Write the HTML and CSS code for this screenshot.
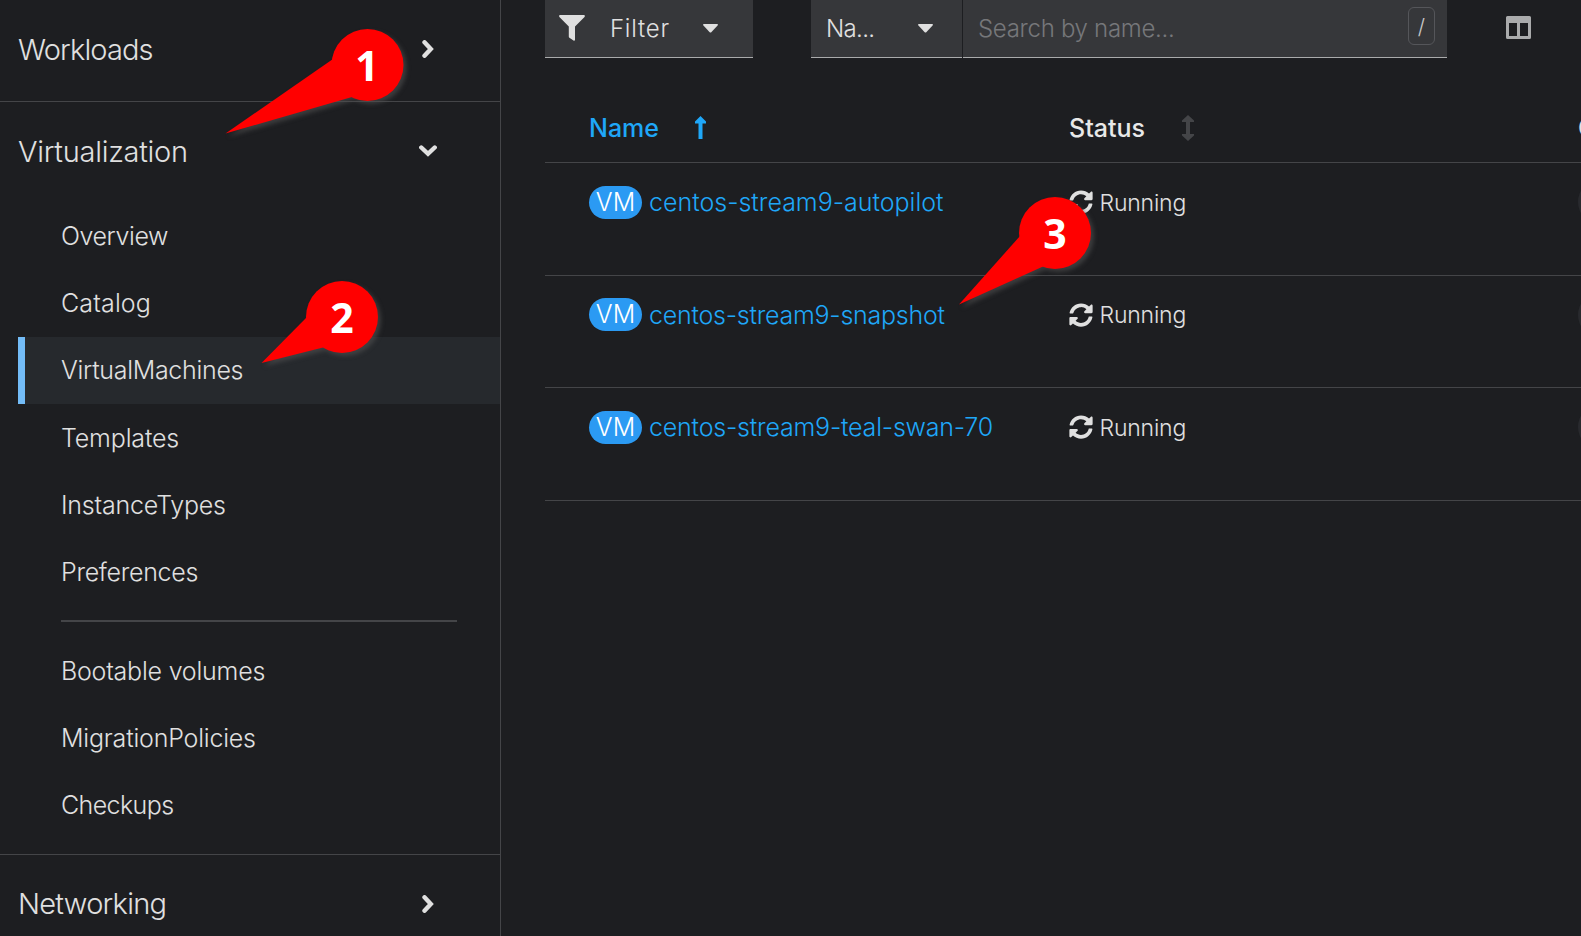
FILE: index.html
```html
<!DOCTYPE html>
<html lang="en">
<head>
<meta charset="utf-8">
<title>VirtualMachines</title>
<link rel="stylesheet" href="styles.css">
</head>
<body>
<svg class="defs" aria-hidden="true">
  <symbol id="chevron" viewBox="0 0 12 18"><path d="M2.500 2.300 8.800 9l-6.300 6.700" fill="none" stroke="currentColor" stroke-width="4.400" stroke-linecap="round"/></symbol>
  <symbol id="caret" viewBox="0 0 15 9"><path d="M.8 0h13.4q1.2.4.4 1.6L8.3 8.2q-.8.8-1.6 0L.4 1.6Q-.4.4.8 0z" fill="currentColor"/></symbol>
  <symbol id="sync" viewBox="0 0 512 512"><path fill="currentColor" d="M370.72 133.28C339.458 104.008 298.888 87.962 255.848 88c-77.458.068-144.328 53.178-162.791 126.85-1.344 5.363-6.122 9.15-11.651 9.15H24.103c-7.498 0-13.194-6.807-11.807-14.176C33.933 94.924 134.813 8 256 8c66.448 0 126.791 26.136 171.315 68.685L463.03 40.97C478.149 25.851 504 36.559 504 57.941V192c0 13.255-10.745 24-24 24H345.941c-21.382 0-32.09-25.851-16.971-40.971l41.75-41.749zM32 296h134.059c21.382 0 32.09 25.851 16.971 40.971l-41.75 41.75c31.262 29.273 71.835 45.319 114.876 45.28 77.418-.07 144.315-53.144 162.787-126.849 1.344-5.363 6.122-9.15 11.651-9.15h57.304c7.498 0 13.194 6.807 11.807 14.176C478.067 417.076 377.187 504 256 504c-66.448 0-126.791-26.136-171.315-68.685L48.97 471.03C33.851 486.149 8 475.441 8 454.059V320c0-13.255 10.745-24 24-24z"/></symbol>
</svg>
<div class="page">
  <nav class="sidebar">
    <section class="group group-first">
      <div class="group-head"><span class="t-workloads">Workloads</span><svg class="chev"><use href="#chevron"/></svg></div>
    </section>
    <section class="group group-open">
      <div class="group-head"><span class="t-virtualization">Virtualization</span><svg class="chev down"><use href="#chevron"/></svg></div>
      <ul class="items">
        <li><span class="t-overview">Overview</span></li>
        <li><span class="t-catalog">Catalog</span></li>
        <li class="active"><span class="t-vms">VirtualMachines</span></li>
        <li><span class="t-templates">Templates</span></li>
        <li><span class="t-instance">InstanceTypes</span></li>
        <li><span class="t-preferences">Preferences</span></li>
        <li class="rule"></li>
        <li><span class="t-bootable">Bootable volumes</span></li>
        <li><span class="t-migration">MigrationPolicies</span></li>
        <li><span class="t-checkups">Checkups</span></li>
      </ul>
    </section>
    <section class="group group-last">
      <div class="group-head"><span class="t-networking">Networking</span><svg class="chev"><use href="#chevron"/></svg></div>
    </section>
  </nav>
  <main class="content">
    <div class="toolbar">
      <div class="control filter">
        <svg class="funnel" viewBox="0 0 26 26"><path fill="currentColor" d="M1 0h24q1.400.4.5 1.900L16 11.500V25q-.4 1.200-1.500.6L10.400 22.800q-.6-.5-.6-1.200V11.500L.4 1.900Q-.4.4 1 0z"/></svg>
        <span class="t-filter">Filter</span>
        <svg class="caret"><use href="#caret"/></svg>
      </div>
      <div class="control attribute"><span class="t-na">Na...</span><svg class="caret"><use href="#caret"/></svg></div>
      <div class="control search"><span class="t-search">Search by name...</span><kbd>/</kbd></div>
      <svg class="columns" viewBox="0 0 25 23"><path fill="currentColor" fill-rule="evenodd" d="M1.500 0h22Q25 0 25 1.500v20q0 1.500-1.500 1.500h-22Q0 23 0 21.500v-20Q0 0 1.500 0zM3 7v13h8V7zm11 0v13h8V7z"/></svg>
    </div>
    <div class="table">
      <div class="row head">
        <div class="cell name"><span class="t-name">Name</span><svg class="sort-up" viewBox="0 0 11 23"><path fill="currentColor" d="M5.500 0 11 5.500V7.500H7.500V23h-4V7.500H0V5.500z"/></svg></div>
        <div class="cell status"><span class="t-status">Status</span><svg class="sort-both" viewBox="0 0 12 26"><path fill="currentColor" d="M6 0 12 5.500V7H8v12h4v1.500L6 26 0 20.500V19h4V7H0V5.500z"/></svg></div>
        <div class="cell more">C</div>
      </div>
      <div class="row">
        <div class="cell name"><span class="badge">VM</span><a class="t-autopilot">centos-stream9-autopilot</a></div>
        <div class="cell status"><svg class="sync"><use href="#sync"/></svg><span class="t-running">Running</span></div>
        <div class="cell more"><i class="disc"></i></div>
      </div>
      <div class="row">
        <div class="cell name"><span class="badge">VM</span><a class="t-snapshot">centos-stream9-snapshot</a></div>
        <div class="cell status"><svg class="sync"><use href="#sync"/></svg><span class="t-running">Running</span></div>
        <div class="cell more"><i class="disc"></i></div>
      </div>
      <div class="row">
        <div class="cell name"><span class="badge">VM</span><a class="t-swan">centos-stream9-teal-swan-70</a></div>
        <div class="cell status"><svg class="sync"><use href="#sync"/></svg><span class="t-running">Running</span></div>
        <div class="cell more"><i class="disc"></i></div>
      </div>
    </div>
  </main>
</div>
<svg class="callouts" viewBox="0 0 1581 936">
  <g class="pin"><path d="M225.500 133.500 333 59 352 97z"/><circle cx="367.500" cy="65" r="36"/></g>
  <g class="pin"><path d="M261.500 363 307 317 323 347.500z"/><circle cx="342" cy="317" r="36"/></g>
  <g class="pin"><path d="M959 304.500 1020 236 1043 266.500z"/><circle cx="1055" cy="233" r="36"/></g>
  <text x="367" y="81">1</text>
  <text x="342" y="333">2</text>
  <text x="1055" y="249">3</text>
</svg>
</body>
</html>
```
FILE: styles.css
```css
* { box-sizing: border-box; }
body {
  margin: 0;
  width: 1581px;
  height: 936px;
  overflow: hidden;
  background: #1d1e21;
  color: #e0e0e0;
  font-family: Inter, "Open Sans", sans-serif;
  font-weight: 300;
  font-size: 25px;
}
.defs { display: none; }
svg { flex: none; }
span, a { white-space: nowrap; }
.page { display: flex; height: 936px; overflow: hidden; }

.sidebar { width: 501px; flex: none; border-right: 1px solid #444548; }
.group { border-bottom: 1px solid #444548; }
.group-first { height: 102px; }
.group-open { height: 753px; }
.group-head {
  display: flex;
  align-items: center;
  justify-content: space-between;
  height: 100.500px;
  padding: 0 66px 0 18px;
  font-size: 29px;
  line-height: 99px;
}
.group-head span { margin-top: -2px; }
.group-last .group-head span { margin-top: -4px; }
.chev { width: 12px; height: 18px; margin-top: -3px; }
.chev.down { transform: rotate(90deg); }
.items { list-style: none; margin: 0; padding: 0 0 0 18px; }
.items li {
  height: 67.200px;
  padding-left: 43px;
  line-height: 67.500px;
}
.items .active { padding-left: 36px; border-left: 7px solid #73bcf7; background: #26292d; }
.items .active ~ li { line-height: 69px; }
.items .rule {
  height: 2px;
  margin: 14px 43px 15px;
  padding: 0;
  background: #444548;
}

.content { flex: 1; min-width: 0; padding-left: 44px; }
.toolbar { display: flex; height: 58px; }
.control {
  display: flex;
  align-items: center;
  height: 58px;
  background: #36373a;
  border-bottom: 1px solid #aaabac;
  font-size: 24px;
}
.filter { width: 208px; margin-right: 58px; padding-left: 14px; }
.funnel { width: 26px; height: 26px; margin: -2px 25px 0 0; }
.filter span { width: 93px; }
.caret { width: 15px; height: 9px; }
.attribute { width: 151px; margin-right: 1px; padding-left: 15px; }
.attribute span { width: 92px; }
.search { width: 484px; padding: 0 12px 0 15px; justify-content: space-between; color: #76777a; }
kbd {
  width: 27px;
  height: 38px;
  margin-top: -5px;
  border: 1px solid #55565a;
  border-radius: 6px;
  color: #c8c8c8;
  font: 300 21px/38px Inter, sans-serif;
  text-align: center;
}
.columns { width: 25px; height: 23px; margin: 16px 0 0 59px; color: #aaabac; }

.table { padding-top: 46px; }
.row { display: flex; height: 112.600px; border-bottom: 1px solid #444548; }
.head { height: 59px; font-weight: 500; }
.cell { display: flex; flex: none; align-items: center; height: 33px; margin-top: 22.600px; }
.head .cell { height: 46px; margin-top: 1px; }
.head .cell svg { margin-top: -1px; }
.cell.name { width: 480px; padding-left: 44px; color: #1fa7f8; }
.cell.status { width: 554px; padding-left: 44px; }
.head .status { color: #e8e8e8; }
.head .more { width: 4px; overflow: hidden; margin-left: -1px; }
.sort-up { width: 11px; height: 23px; }
.sort-both { width: 12px; height: 26px; color: #444548; }
.head .name span { width: 106px; }
.head .status span { width: 113px; }
.badge {
  width: 53px;
  height: 33px;
  margin-right: 7px;
  border-radius: 17px;
  background: #2b9af3;
  color: #fff;
  line-height: 33px;
  text-align: center;
}
.sync { width: 24px; height: 24px; margin-right: 6px; }
.disc { flex: none; width: 46px; height: 46px; border-radius: 50%; background: #292a2e; margin-left: -1px; }

.t-workloads { letter-spacing: -.85px; }
.t-virtualization { letter-spacing: -.28px; }
.t-networking { letter-spacing: -.75px; }
.t-overview { letter-spacing: -.43px; }
.t-catalog { letter-spacing: .15px; }
.t-vms { letter-spacing: -.3px; }
.t-templates { letter-spacing: -.16px; }
.t-instance { letter-spacing: -.2px; }
.t-preferences { letter-spacing: -.3px; }
.t-bootable { letter-spacing: -.22px; }
.t-migration { letter-spacing: -.2px; }
.t-checkups { letter-spacing: -.6px; }
.t-filter { letter-spacing: .75px; }
.t-na { letter-spacing: -.65px; }
.t-search { letter-spacing: -.3px; }
.t-snapshot { letter-spacing: -.24px; }
.t-swan { letter-spacing: -.2px; }
.t-running { font-size: 23px; letter-spacing: -.2px; padding: 1.500px 0 0 .5px; }

.callouts { position: absolute; left: 0; top: 0; width: 1581px; height: 936px; }
.pin { fill: #f00; filter: drop-shadow(3px 3px 2px rgba(80, 80, 80, .6)); }
.callouts text { fill: #fff; font: 700 41px "Open Sans", sans-serif; text-anchor: middle; }
```
